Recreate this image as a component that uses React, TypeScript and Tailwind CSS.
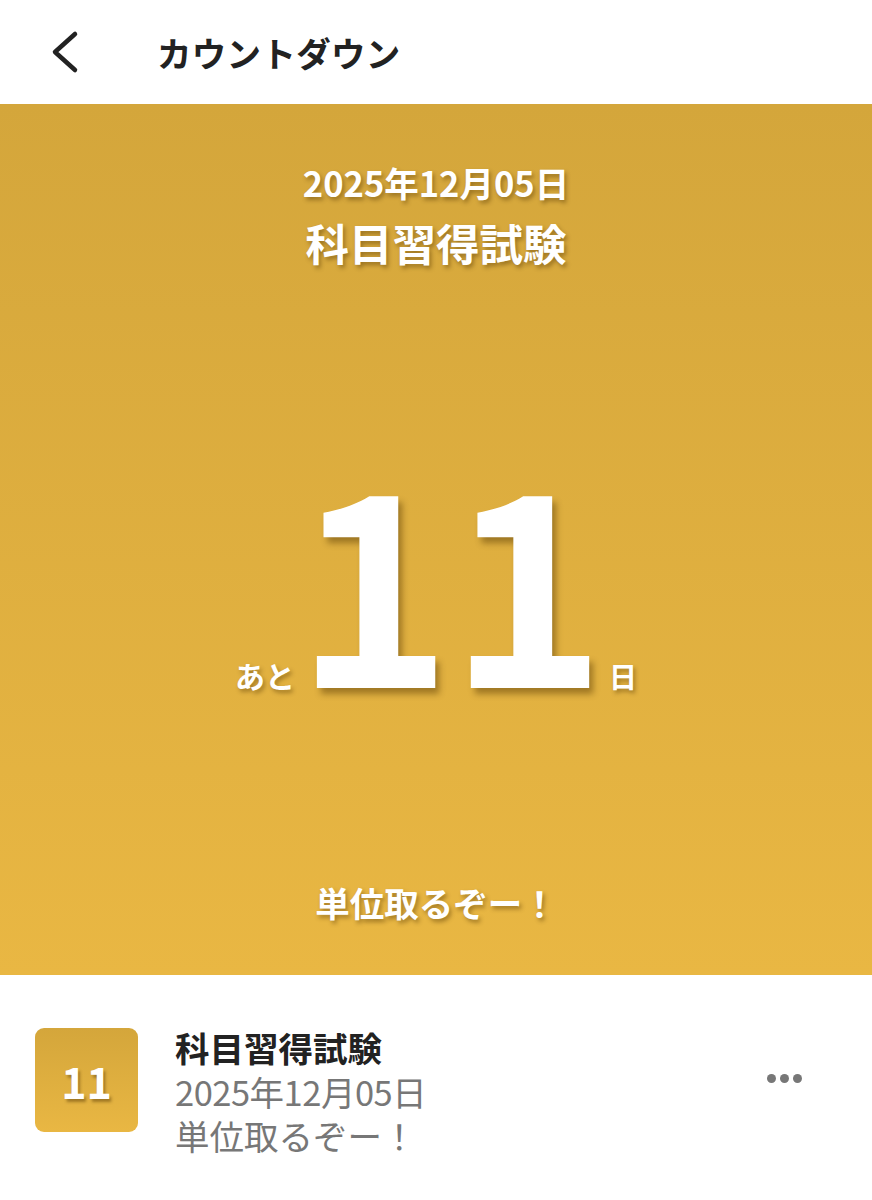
import React from "react";

const jp = { fontFamily: '"Noto Sans CJK JP", "Noto Sans", sans-serif' };

export default function App() {
  return (
    <div className="w-[872px] h-[1200px] bg-white overflow-hidden" style={jp}>
      <header className="h-[104px] flex items-center">
        <div className="w-[157px] pl-[48px] flex items-center">
          <svg width="34" height="44" viewBox="0 0 34 44" fill="none">
            <path d="M27 4 L7 22 L27 40" stroke="#222" strokeWidth="4.5" strokeLinecap="round" strokeLinejoin="round" />
          </svg>
        </div>
        <h1 className="text-[34.5px] font-bold text-[#222] tracking-[0.3px] leading-none">カウントダウン</h1>
      </header>

      <section className="h-[871px] bg-gradient-to-b from-[#d4a63b] to-[#e9b743] flex flex-col items-center text-white [text-shadow:2px_3px_4px_rgba(80,50,0,0.45)]">
        <div className="mt-[54px] text-[34.5px] font-bold leading-[48px]">2025年12月05日</div>
        <div className="mt-[8px] text-[43.5px] font-bold leading-[58px]">科目習得試験</div>
        <div className="mt-[200px] flex items-baseline h-[200px]">
          <span className="text-[30px] font-bold leading-none">あと</span>
          <span className="text-[266px] font-bold leading-[200px] tracking-[-3px] [text-shadow:4px_6px_6px_rgba(80,50,0,0.45)]">11</span>
          <span className="text-[28px] font-bold leading-none ml-[6px]">日</span>
        </div>
        <div className="mt-[206px] text-[34.5px] font-bold leading-[48px]">単位取るぞー！</div>
      </section>

      <div className="flex items-start pt-[53px] pl-[35px] pr-[70px]">
        <div className="w-[103px] h-[104px] rounded-[9px] bg-gradient-to-b from-[#d4a63b] to-[#e9b743] flex items-center justify-center">
          <span className="text-white text-[43px] font-bold leading-none [text-shadow:2px_3px_3px_rgba(80,50,0,0.45)]">11</span>
        </div>
        <div className="ml-[37px] flex-1 flex flex-col -mt-[3px]">
          <div className="text-[34.5px] font-bold text-[#222] leading-[44px]">科目習得試験</div>
          <div className="text-[34.5px] text-[#777] leading-[44px] tracking-[-0.5px]">2025年12月05日</div>
          <div className="text-[34.5px] text-[#777] leading-[44px]">単位取るぞー！</div>
        </div>
        <div className="mt-[46px] flex gap-[4px]">
          <span className="w-[9px] h-[9px] rounded-full bg-[#777]" />
          <span className="w-[9px] h-[9px] rounded-full bg-[#777]" />
          <span className="w-[9px] h-[9px] rounded-full bg-[#777]" />
        </div>
      </div>
    </div>
  );
}
